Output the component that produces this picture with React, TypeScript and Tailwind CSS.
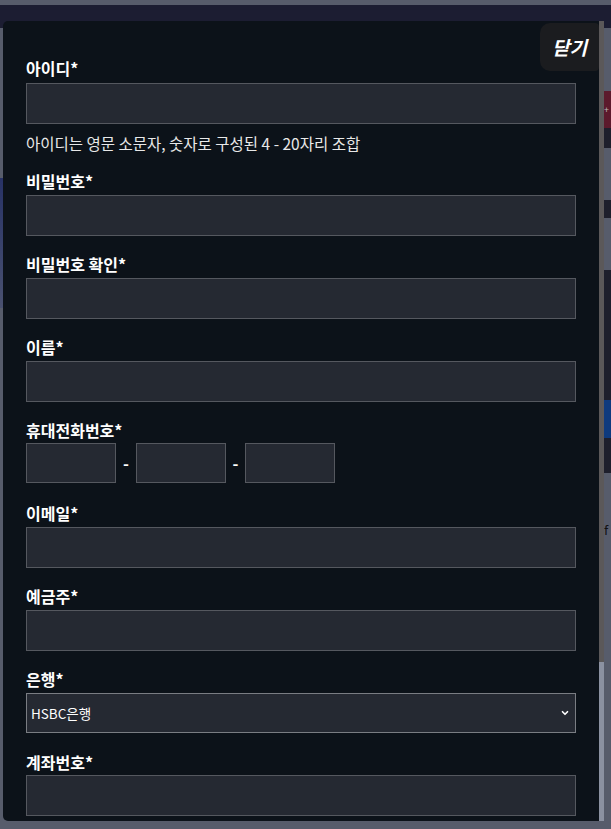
import { ChevronDown } from 'lucide-react';

const font = { fontFamily: '"Noto Sans CJK KR", "Noto Sans", sans-serif' };

function Label({ text, className = '' }: { text: string; className?: string }) {
  return <div className={`h-[22px] leading-[22px] text-[16px] font-bold text-white ${className}`}>{text}</div>;
}

function Field({ label, mt = 'mt-[17px]', inputMt = 'mt-[3px]' }: { label: string; mt?: string; inputMt?: string }) {
  return (
    <div className={mt}>
      <Label text={label} />
      <input className={`${inputMt} block h-[41px] w-[550px] border border-[#55585f] bg-[#252932] px-2 text-[14px] text-white outline-none`} />
    </div>
  );
}

export default function App() {
  return (
    <div className="relative h-[829px] w-[611px] overflow-hidden bg-[#575c6b]" style={font}>
      {/* page behind the modal */}
      <div className="h-[5px]" />
      <div className="h-[23px] bg-[#1c1d32]" />
      <div className="flex justify-between">
        <div className="w-[4px]">
          <div className="h-[150px]" />
          <div className="h-[130px] bg-gradient-to-b from-[#283266] to-[#4a5170]" />
        </div>
        <div className="w-[7px]">
          <div className="h-[63px] bg-[#575c6b]" />
          <div className="h-[37px] bg-[#5c1a2c] text-[9px] leading-[37px] text-[#bbb]">+</div>
          <div className="h-[20px] bg-[#1e1f2c]" />
          <div className="h-[52px] bg-[#575c6b]" />
          <div className="h-[18px] bg-[#1e1f2c]" />
          <div className="h-[52px] bg-[#575c6b]" />
          <div className="h-[130px] bg-[#1e1f2c]" />
          <div className="h-[38px] bg-[#0e3a7e]" />
          <div className="h-[35px] bg-[#1e1f2c]" />
          <div className="h-[70px] bg-[#575c6b] pt-[50px] text-[13px] leading-none text-[#111]">f</div>
        </div>
      </div>

      {/* modal */}
      <div className="absolute left-[3px] top-[21px] flex h-[800px] w-[601px]">
        <div className="relative flex-1 rounded-l-[5px] bg-[#0c1219] px-[23px] pt-[36px]">
          <button className="absolute right-0 top-[2px] flex h-[48px] w-[59px] items-center justify-center rounded-l-[10px] rounded-r-[4px] bg-[#1b1c1f] text-[19px] font-bold italic text-white">
            닫기
          </button>

          <Label text="아이디*" />
          <input className="mt-[4px] block h-[41px] w-[550px] border border-[#55585f] bg-[#252932] px-2 text-white outline-none" />
          <div className="mt-[9px] h-[20px] leading-[20px] text-[15.5px] text-[#e8e8e8]">
            아이디는 영문 소문자, 숫자로 구성된 4 - 20자리 조합
          </div>

          <Field label="비밀번호*" />
          <Field label="비밀번호 확인*" />
          <Field label="이름*" />

          <div className="mt-[17px]">
            <Label text="휴대전화번호*" />
            <div className="mt-[2px] flex items-center">
              <input className="block h-[40px] w-[90px] border border-[#55585f] bg-[#252932] outline-none" />
              <span className="w-[20px] text-center text-[16px] font-bold text-white">-</span>
              <input className="block h-[40px] w-[90px] border border-[#55585f] bg-[#252932] outline-none" />
              <span className="w-[19px] text-center text-[16px] font-bold text-white">-</span>
              <input className="block h-[40px] w-[90px] border border-[#55585f] bg-[#252932] outline-none" />
            </div>
          </div>

          <Field label="이메일*" mt="mt-[19px]" />
          <Field label="예금주*" />

          <div className="mt-[17px]">
            <Label text="은행*" />
            <div className="mt-[3px] flex h-[40px] w-[550px] items-center justify-between border border-[#7a7d83] bg-[#252932] pl-[4px] pr-[5px]">
              <span className="text-[13.5px] text-white">HSBC은행</span>
              <ChevronDown size={10} strokeWidth={4} className="text-white" />
            </div>
          </div>

          <Field label="계좌번호*" mt="mt-[18px]" inputMt="mt-[2px]" />
        </div>
        <div className="flex w-[6px] flex-col">
          <div className="h-[641px] bg-[#5b5859]" />
          <div className="flex-1 bg-[#8b91a1]" />
        </div>
      </div>
    </div>
  );
}
